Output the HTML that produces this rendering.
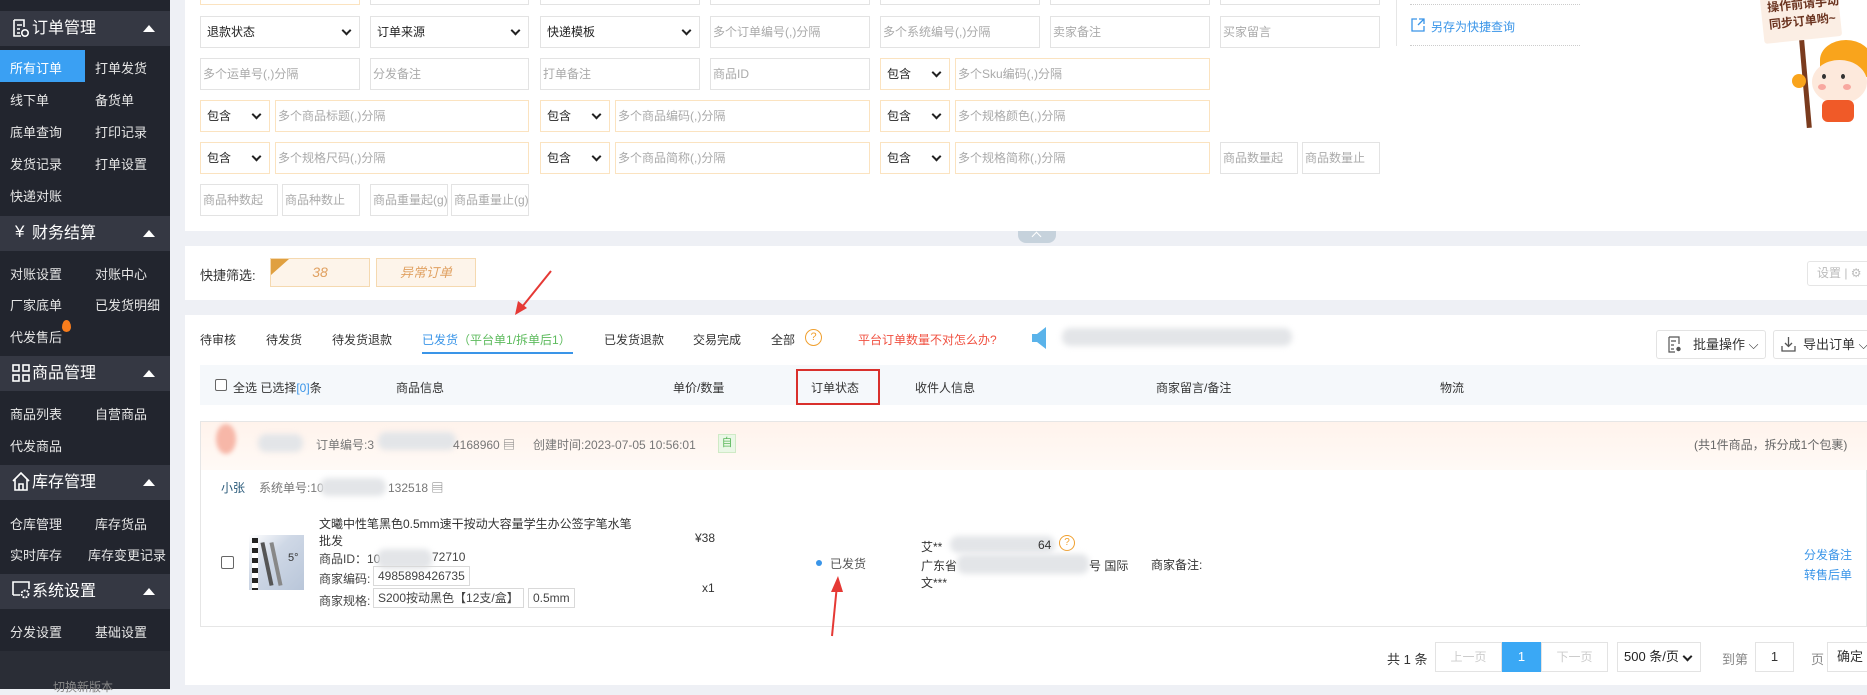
<!DOCTYPE html>
<html><head><meta charset="utf-8">
<style>
*{margin:0;padding:0;box-sizing:border-box}
body{width:1867px;height:689px;overflow:hidden;background:#eef0f5;font-family:"Liberation Sans","Noto Sans CJK SC",sans-serif;font-size:12px;color:#333;position:relative}
.a{position:absolute;white-space:nowrap}
.sb{position:absolute;left:0;top:0;width:170px;height:689px;background:#22252e}
.sh{position:absolute;left:0;width:170px;height:35px;background:#353843;color:#fff;font-size:16px;line-height:35px;padding-left:32px}
.sh:after{content:"";position:absolute;right:15px;top:14px;border:6px solid transparent;border-top:0;border-bottom:7px solid #fff}
.si{position:absolute;color:#e6e6e6;font-size:13px;white-space:nowrap}
.in{position:absolute;height:32px;border:1px solid #e3e3e3;background:#fff;color:#aaa;line-height:30px;padding-left:2px;font-size:12px;white-space:nowrap;overflow:hidden}
.ino{border-color:#fbe3c0}
.sel{position:absolute;height:32px;border:1px solid #e3e3e3;background:#fff;color:#222;line-height:30px;padding-left:6px;font-size:12px;white-space:nowrap}
.sel:after{content:"";position:absolute;right:9px;top:10px;width:5px;height:5px;border-right:2px solid #222;border-bottom:2px solid #222;transform:rotate(45deg)}
.selo{border-color:#fbe3c0}
.blur{position:absolute;background:#e3e5e8;border-radius:8px;filter:blur(3px)}
.bx{position:absolute;border:1px solid #d9d9d9;height:20px;line-height:18px;padding:0 4px;color:#444;white-space:nowrap}
</style></head><body>

<!-- sidebar -->
<div class="sb">
  <div class="sh" style="top:11px">订单管理</div>
  <svg class="a" style="left:12px;top:19px" width="18" height="19" viewBox="0 0 18 19"><path d="M2 1h10v7M2 1v16h7M5 6h5M5 10h3M5 14h3" stroke="#fff" stroke-width="1.6" fill="none"/><circle cx="13" cy="14" r="3.2" stroke="#fff" stroke-width="1.6" fill="none"/></svg>
  <div class="a" style="left:0;top:50px;width:85px;height:32px;background:#3aa0f3"></div>
  <div class="si" style="left:10px;top:58px;color:#fff">所有订单</div><div class="si" style="left:95px;top:58px">打单发货</div>
  <div class="si" style="left:10px;top:90px">线下单</div><div class="si" style="left:95px;top:90px">备货单</div>
  <div class="si" style="left:10px;top:122px">底单查询</div><div class="si" style="left:95px;top:122px">打印记录</div>
  <div class="si" style="left:10px;top:154px">发货记录</div><div class="si" style="left:95px;top:154px">打单设置</div>
  <div class="si" style="left:10px;top:186px">快递对账</div>
  <div class="sh" style="top:216px">财务结算</div>
  <div class="a" style="left:15px;top:222px;color:#fff;font-size:17px">¥</div>
  <div class="si" style="left:10px;top:264px">对账设置</div><div class="si" style="left:95px;top:264px">对账中心</div>
  <div class="si" style="left:10px;top:295px">厂家底单</div><div class="si" style="left:95px;top:295px">已发货明细</div>
  <div class="si" style="left:10px;top:327px">代发售后</div>
  <div class="a" style="left:62px;top:320px;width:9px;height:12px;background:#f97d1c;border-radius:50% 50% 50% 50%/60% 60% 40% 40%"></div>
  <div class="sh" style="top:356px">商品管理</div>
  <svg class="a" style="left:12px;top:364px" width="18" height="18" viewBox="0 0 18 18"><g stroke="#fff" stroke-width="1.6" fill="none"><rect x="1" y="1" width="6" height="6"/><rect x="11" y="1" width="6" height="6"/><rect x="1" y="11" width="6" height="6"/><rect x="11" y="11" width="6" height="6"/></g></svg>
  <div class="si" style="left:10px;top:404px">商品列表</div><div class="si" style="left:95px;top:404px">自营商品</div>
  <div class="si" style="left:10px;top:436px">代发商品</div>
  <div class="sh" style="top:465px">库存管理</div>
  <svg class="a" style="left:12px;top:472px" width="18" height="19" viewBox="0 0 18 19"><path d="M1 9L9 1l8 8M3 7v11h12V7M7 18v-6h4v6" stroke="#fff" stroke-width="1.6" fill="none"/></svg>
  <div class="si" style="left:10px;top:514px">仓库管理</div><div class="si" style="left:95px;top:514px">库存货品</div>
  <div class="si" style="left:10px;top:545px">实时库存</div><div class="si" style="left:88px;top:545px">库存变更记录</div>
  <div class="sh" style="top:574px">系统设置</div>
  <svg class="a" style="left:12px;top:581px" width="19" height="19" viewBox="0 0 19 19"><path d="M1 14V1h16v7M1 14h7" stroke="#fff" stroke-width="1.6" fill="none"/><circle cx="13" cy="13" r="3.5" stroke="#fff" stroke-width="1.8" fill="none" stroke-dasharray="2 1"/></svg>
  <div class="si" style="left:10px;top:622px">分发设置</div><div class="si" style="left:95px;top:622px">基础设置</div>
  <div class="a" style="left:0;top:651px;width:170px;height:38px;background:#2a2d36"></div>
  <div class="a" style="left:53px;top:678px;color:#888;font-size:12px">切换新版本</div>
</div>

<!-- search panel -->
<div class="a" style="left:185px;top:0;width:1682px;height:231px;background:#fff"></div>
<div class="in ino" style="left:200px;top:-27px;width:160px"></div>
<div class="in" style="left:370px;top:-27px;width:159px"></div>
<div class="in" style="left:540px;top:-27px;width:160px"></div>
<div class="in" style="left:710px;top:-27px;width:160px"></div>
<div class="in" style="left:880px;top:-27px;width:160px"></div>
<div class="in" style="left:1050px;top:-27px;width:160px"></div>
<div class="in" style="left:1220px;top:-27px;width:160px"></div>
<div class="sel" style="left:200px;top:16px;width:160px">退款状态</div>
<div class="sel" style="left:370px;top:16px;width:159px">订单来源</div>
<div class="sel" style="left:540px;top:16px;width:160px">快递模板</div>
<div class="in" style="left:710px;top:16px;width:160px">多个订单编号(,)分隔</div>
<div class="in" style="left:880px;top:16px;width:160px">多个系统编号(,)分隔</div>
<div class="in" style="left:1050px;top:16px;width:160px">卖家备注</div>
<div class="in" style="left:1220px;top:16px;width:160px">买家留言</div>
<div class="in" style="left:200px;top:58px;width:160px">多个运单号(,)分隔</div>
<div class="in" style="left:370px;top:58px;width:159px">分发备注</div>
<div class="in" style="left:540px;top:58px;width:160px">打单备注</div>
<div class="in" style="left:710px;top:58px;width:160px">商品ID</div>
<div class="sel selo" style="left:880px;top:58px;width:70px">包含</div>
<div class="in ino" style="left:955px;top:58px;width:255px">多个Sku编码(,)分隔</div>
<div class="sel selo" style="left:200px;top:100px;width:70px">包含</div>
<div class="in ino" style="left:275px;top:100px;width:254px">多个商品标题(,)分隔</div>
<div class="sel selo" style="left:540px;top:100px;width:70px">包含</div>
<div class="in ino" style="left:615px;top:100px;width:255px">多个商品编码(,)分隔</div>
<div class="sel selo" style="left:880px;top:100px;width:70px">包含</div>
<div class="in ino" style="left:955px;top:100px;width:255px">多个规格颜色(,)分隔</div>
<div class="sel selo" style="left:200px;top:142px;width:70px">包含</div>
<div class="in ino" style="left:275px;top:142px;width:254px">多个规格尺码(,)分隔</div>
<div class="sel selo" style="left:540px;top:142px;width:70px">包含</div>
<div class="in ino" style="left:615px;top:142px;width:255px">多个商品简称(,)分隔</div>
<div class="sel selo" style="left:880px;top:142px;width:70px">包含</div>
<div class="in ino" style="left:955px;top:142px;width:255px">多个规格简称(,)分隔</div>
<div class="in" style="left:1220px;top:142px;width:78px">商品数量起</div>
<div class="in" style="left:1302px;top:142px;width:78px">商品数量止</div>
<div class="in" style="left:200px;top:184px;width:78px">商品种数起</div>
<div class="in" style="left:282px;top:184px;width:78px">商品种数止</div>
<div class="in" style="left:370px;top:184px;width:78px">商品重量起(g)</div>
<div class="in" style="left:451px;top:184px;width:78px">商品重量止(g)</div>
<div class="a" style="left:1396px;top:0;width:1px;height:46px;background:#e6e6e6"></div>
<div class="a" style="left:1410px;top:4px;width:170px;border-top:1px dotted #ccc"></div>
<div class="a" style="left:1410px;top:45px;width:170px;border-top:1px dotted #ccc"></div>
<svg class="a" style="left:1411px;top:18px" width="14" height="14" viewBox="0 0 14 14"><path d="M6 1H1v12h12V8M8 1h5v5M13 1L7 7" stroke="#3a95e8" stroke-width="1.3" fill="none"/></svg>
<div class="a" style="left:1431px;top:18px;color:#3a95e8;font-size:12px">另存为快捷查询</div>
<!-- girl -->
<div class="a" style="left:1762px;top:-6px;width:78px;height:46px;background:#fbeee4;transform:rotate(-6deg);border-radius:3px"></div>
<div class="a" style="left:1768px;top:-4px;color:#6b3420;font-size:12px;font-weight:bold;line-height:17px;transform:rotate(-6deg)">操作前请手动<br>同步订单哟~</div>
<div class="a" style="left:1803px;top:40px;width:5px;height:88px;background:#7a3b1e;transform:rotate(-5deg)"></div>
<div class="a" style="left:1820px;top:40px;width:52px;height:40px;background:#f9a41c;border-radius:50% 50% 30% 30%"></div>
<div class="a" style="left:1812px;top:60px;width:55px;height:44px;background:#fde9dc;border-radius:50%"></div>
<div class="a" style="left:1818px;top:84px;width:8px;height:6px;background:#f8a8a0;border-radius:50%"></div>
<div class="a" style="left:1843px;top:84px;width:8px;height:6px;background:#f8a8a0;border-radius:50%"></div>
<div class="a" style="left:1822px;top:74px;width:4px;height:5px;background:#333;border-radius:50%"></div>
<div class="a" style="left:1841px;top:74px;width:4px;height:5px;background:#333;border-radius:50%"></div>
<div class="a" style="left:1822px;top:100px;width:32px;height:22px;background:#f05a28;border-radius:6px"></div>
<div class="a" style="left:1792px;top:74px;width:14px;height:14px;background:#f9a41c;border-radius:50%"></div>

<div class="a" style="left:1018px;top:231px;width:38px;height:12px;background:#c6d2dc;border-radius:0 0 8px 8px"></div>
<div class="a" style="left:1033px;top:233px;width:7px;height:7px;border-left:1.5px solid #fff;border-top:1.5px solid #fff;transform:rotate(45deg)"></div>

<!-- quick filter -->
<div class="a" style="left:185px;top:246px;width:1682px;height:54px;background:#fff"></div>
<div class="a" style="left:200px;top:265px;font-size:13px;color:#333">快捷筛选:</div>
<div class="a" style="left:270px;top:258px;width:100px;height:29px;background:#fdf4ea;border:1px solid #f5d9b0;color:#e0a060;font-style:italic;font-size:14px;text-align:center;line-height:27px">38</div>
<div class="a" style="left:271px;top:259px;width:0;height:0;border-top:16px solid #e0a040;border-right:18px solid transparent"></div>
<div class="a" style="left:376px;top:258px;width:100px;height:29px;background:#fdf4ea;border:1px solid #f5d9b0;color:#e0a060;font-style:italic;font-size:13px;text-align:center;line-height:27px">异常订单</div>
<div class="a" style="left:1807px;top:261px;width:70px;height:25px;border:1px solid #e5e5e5;border-radius:3px;color:#bbb;font-size:12px;line-height:23px;padding-left:9px">设置 | ⚙</div>

<!-- list panel -->
<div class="a" style="left:185px;top:315px;width:1682px;height:370px;background:#fff"></div>
<div class="a" style="left:200px;top:331px;font-size:12px">待审核</div>
<div class="a" style="left:266px;top:331px">待发货</div>
<div class="a" style="left:332px;top:331px">待发货退款</div>
<div class="a" style="left:422px;top:331px;color:#3a95e8">已发货<span style="color:#5dbb5d">（平台单1/拆单后1）</span></div>
<div class="a" style="left:422px;top:352px;width:151px;height:2px;background:#3a95e8"></div>
<div class="a" style="left:604px;top:331px">已发货退款</div>
<div class="a" style="left:693px;top:331px">交易完成</div>
<div class="a" style="left:771px;top:331px">全部</div>
<div class="a" style="left:805px;top:329px;width:17px;height:17px;border:1.5px solid #f0a030;border-radius:50%;color:#f0a030;font-size:11px;text-align:center;line-height:14px">?</div>
<div class="a" style="left:858px;top:331px;color:#f05040">平台订单数量不对怎么办?</div>
<svg class="a" style="left:1028px;top:324px" width="26" height="28" viewBox="0 0 26 28"><path d="M4 10h5l9-7v22l-9-7H4z" fill="#5ab3ea"/></svg>
<div class="blur" style="left:1062px;top:328px;width:230px;height:18px"></div>
<div class="a" style="left:1656px;top:330px;width:110px;height:29px;border:1px solid #e3e3e3;border-radius:3px;font-size:13px;line-height:27px;padding-left:36px">批量操作 ⌵</div>
<svg class="a" style="left:1668px;top:336px" width="14" height="17" viewBox="0 0 14 17"><path d="M1 1h10v7M1 1v15h6M3 5h5M3 9h3M3 13h3" stroke="#555" stroke-width="1.2" fill="none"/><circle cx="10.5" cy="13" r="2.2" fill="#555"/></svg>
<div class="a" style="left:1773px;top:330px;width:100px;height:29px;border:1px solid #e3e3e3;border-radius:3px;font-size:13px;line-height:27px;padding-left:29px">导出订单 ⌵</div>
<svg class="a" style="left:1781px;top:336px" width="15" height="16" viewBox="0 0 15 16"><path d="M7.5 1v9M4 7l3.5 3.5L11 7M1 10v5h13v-5" stroke="#555" stroke-width="1.3" fill="none"/></svg>

<div class="a" style="left:200px;top:365px;width:1667px;height:40px;background:#f5f8fb"></div>
<div class="a" style="left:215px;top:379px;width:12px;height:12px;border:1px solid #666;border-radius:2px;background:#fff"></div>
<div class="a" style="left:233px;top:379px">全选 已选择<span style="color:#3a95e8">[0]</span>条</div>
<div class="a" style="left:396px;top:379px">商品信息</div>
<div class="a" style="left:673px;top:379px">单价/数量</div>
<div class="a" style="left:796px;top:369px;width:84px;height:36px;border:2px solid #d9302c"></div>
<div class="a" style="left:811px;top:379px">订单状态</div>
<div class="a" style="left:915px;top:379px">收件人信息</div>
<div class="a" style="left:1156px;top:379px">商家留言/备注</div>
<div class="a" style="left:1440px;top:379px">物流</div>

<div class="a" style="left:200px;top:421px;width:1667px;height:206px;border:1px solid #e6e6e6;background:#fff"></div>
<div class="a" style="left:201px;top:422px;width:1666px;height:48px;background:linear-gradient(#fff3ec,#fffaf6)"></div>
<div class="a" style="left:216px;top:424px;width:20px;height:30px;background:#f7b7a8;border-radius:50%;filter:blur(2px)"></div>
<div class="blur" style="left:258px;top:434px;width:45px;height:18px"></div>
<div class="a" style="left:316px;top:436px;color:#777">订单编号:3</div>
<div class="blur" style="left:378px;top:432px;width:78px;height:18px"></div>
<div class="a" style="left:453px;top:436px;color:#777">4168960 ▤</div>
<div class="a" style="left:533px;top:436px;color:#777">创建时间:2023-07-05 10:56:01</div>
<div class="a" style="left:718px;top:434px;width:18px;height:19px;background:#eaf7e6;border:1px solid #cfeac6;color:#5cb85c;font-size:11px;text-align:center;line-height:17px">自</div>
<div class="a" style="left:1694px;top:436px;color:#666">(共1件商品，拆分成1个包裹)</div>
<div class="a" style="left:221px;top:479px;color:#2a5a7a">小张</div>
<div class="a" style="left:259px;top:479px;color:#777">系统单号:10</div>
<div class="blur" style="left:320px;top:478px;width:66px;height:18px"></div>
<div class="a" style="left:388px;top:479px;color:#777">132518 ▤</div>
<div class="a" style="left:221px;top:556px;width:13px;height:13px;border:1px solid #666;border-radius:2px;background:#fff"></div>
<div class="a" style="left:249px;top:535px;width:55px;height:55px;background:linear-gradient(135deg,#fff 0,#cfd8e6 40%,#b9c6d9 100%)"></div>
<div class="a" style="left:252px;top:538px;width:6px;height:52px;background:repeating-linear-gradient(#222 0 5px,#fff 5px 10px)"></div>
<div class="a" style="left:265px;top:542px;width:4px;height:44px;background:#555;transform:rotate(-12deg)"></div>
<div class="a" style="left:274px;top:542px;width:4px;height:44px;background:#888;transform:rotate(-12deg)"></div>
<div class="a" style="left:288px;top:552px;font-size:11px;color:#333">5°</div>
<div class="a" style="left:319px;top:516px;color:#333;line-height:17px">文曦中性笔黑色0.5mm速干按动大容量学生办公签字笔水笔<br>批发</div>
<div class="a" style="left:319px;top:550px;color:#444">商品ID：10</div>
<div class="blur" style="left:377px;top:549px;width:55px;height:20px"></div>
<div class="a" style="left:432px;top:550px;color:#444">72710</div>
<div class="a" style="left:319px;top:570px;color:#444">商家编码:</div>
<div class="bx" style="left:373px;top:566px">4985898426735</div>
<div class="a" style="left:319px;top:592px;color:#444">商家规格:</div>
<div class="bx" style="left:373px;top:588px;width:151px">S200按动黑色【12支/盒】</div>
<div class="bx" style="left:528px;top:588px">0.5mm</div>
<div class="a" style="left:695px;top:531px">¥38</div>
<div class="a" style="left:702px;top:581px">x1</div>
<div class="a" style="left:816px;top:560px;width:6px;height:6px;border-radius:50%;background:#3a95e8"></div>
<div class="a" style="left:830px;top:555px;color:#555">已发货</div>
<div class="a" style="left:921px;top:538px">艾**</div>
<div class="blur" style="left:950px;top:536px;width:105px;height:17px"></div>
<div class="a" style="left:1038px;top:538px">64</div>
<div class="a" style="left:1059px;top:535px;width:16px;height:16px;border:1.5px solid #f0a030;border-radius:50%;color:#f0a030;font-size:10px;text-align:center;line-height:13px">?</div>
<div class="a" style="left:921px;top:557px">广东省</div>
<div class="blur" style="left:957px;top:554px;width:132px;height:20px"></div>
<div class="a" style="left:1089px;top:557px">号 国际</div>
<div class="a" style="left:921px;top:574px">文***</div>
<div class="a" style="left:1151px;top:556px">商家备注:</div>
<div class="a" style="left:1804px;top:546px;color:#3a95e8">分发备注</div>
<div class="a" style="left:1804px;top:566px;color:#3a95e8">转售后单</div>

<svg class="a" style="left:490px;top:265px" width="70" height="55" viewBox="0 0 70 55"><path d="M61 6L28 47" stroke="#e53935" stroke-width="2"/><path d="M25 50l3-14 9 7z" fill="#e53935"/></svg>
<svg class="a" style="left:824px;top:570px" width="20" height="70" viewBox="0 0 20 70"><path d="M8 66L13 15" stroke="#e53935" stroke-width="2"/><path d="M14 6l-7 16h12z" fill="#e53935"/></svg>

<div class="a" style="left:1387px;top:649px;color:#333;font-size:13px">共 1 条</div>
<div class="a" style="left:1435px;top:642px;width:67px;height:30px;border:1px solid #e3e3e3;color:#ccc;text-align:center;line-height:28px">上一页</div>
<div class="a" style="left:1502px;top:642px;width:39px;height:30px;background:#3aa8f5;color:#fff;text-align:center;line-height:30px;font-size:13px">1</div>
<div class="a" style="left:1541px;top:642px;width:67px;height:30px;border:1px solid #e3e3e3;color:#ccc;text-align:center;line-height:28px">下一页</div>
<div class="sel" style="left:1617px;top:642px;width:84px;height:30px;line-height:28px;font-size:13px;color:#222">500 条/页</div>
<div class="a" style="left:1722px;top:649px;color:#888;font-size:13px">到第</div>
<div class="a" style="left:1755px;top:642px;width:39px;height:30px;border:1px solid #e3e3e3;text-align:center;line-height:28px;font-size:13px">1</div>
<div class="a" style="left:1811px;top:649px;color:#888;font-size:13px">页</div>
<div class="a" style="left:1827px;top:642px;width:50px;height:30px;border:1px solid #e3e3e3;line-height:28px;padding-left:9px;font-size:13px">确定</div>
<div class="a" style="left:185px;top:685px;width:1682px;height:4px;background:#eef0f5"></div>
</body></html>
